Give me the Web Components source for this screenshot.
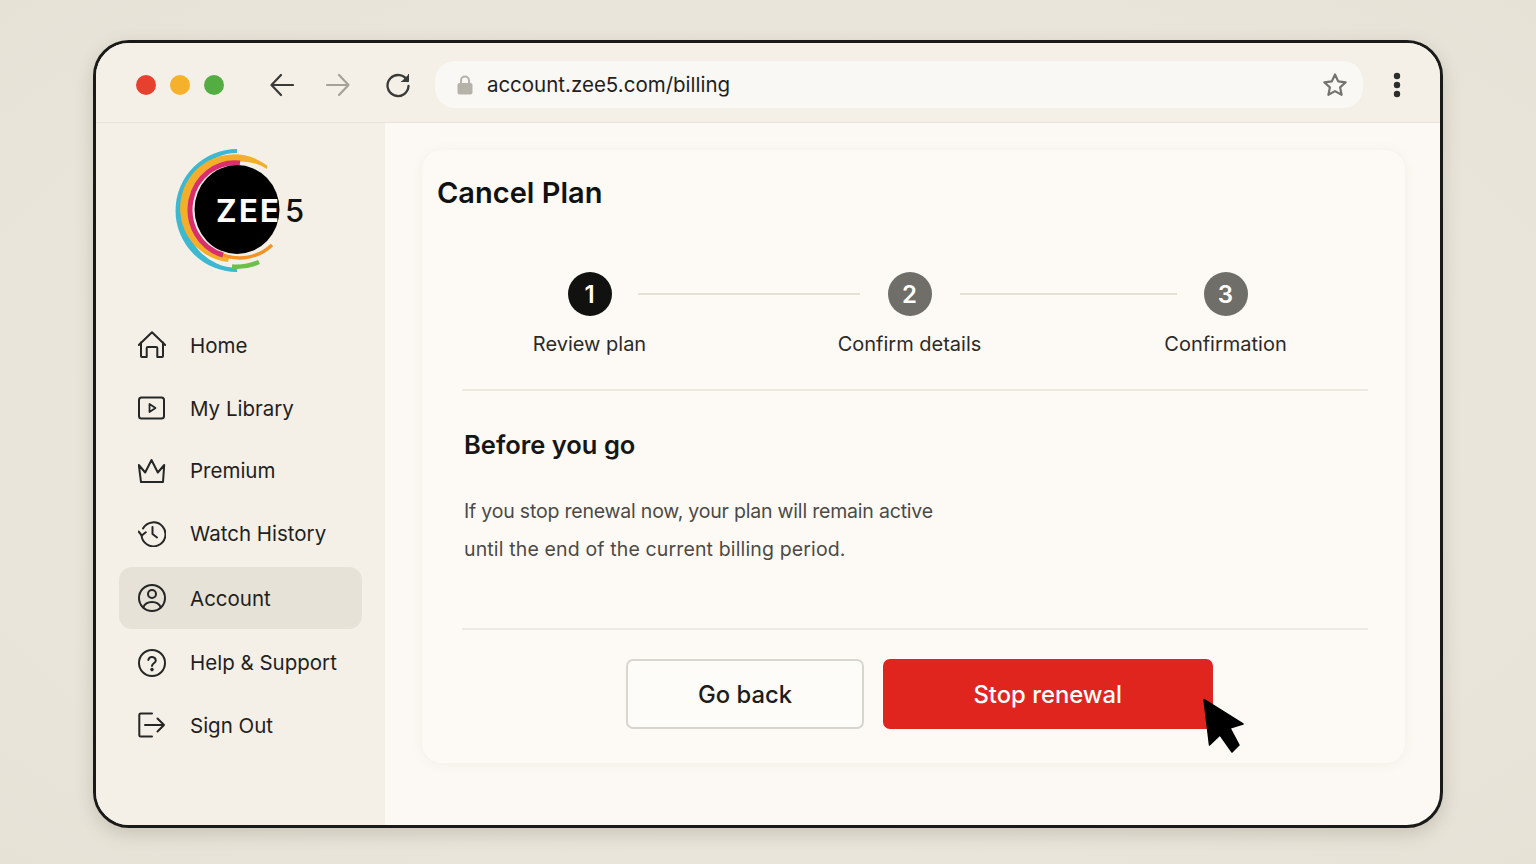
<!DOCTYPE html>
<html lang="en">
<head>
<meta charset="utf-8">
<title>Cancel Plan</title>
<style>
  html, body { margin: 0; height: 100%; }
  body {
    height: 864px;
    overflow: hidden;
    box-sizing: border-box;
    padding: 40px 93px 36px;
    background: radial-gradient(ellipse at center, #ebe8df 0%, #e9e5da 70%, #e6e2d6 100%);
    font-family: Inter, "Liberation Sans", sans-serif;
    color: #1b1b1a;
  }
</style>
</head>
<body>
<browser-window>
  <browser-toolbar slot="toolbar" url="account.zee5.com/billing"></browser-toolbar>
  <side-nav slot="side">
    <zee-logo></zee-logo>
    <nav-item icon="home">Home</nav-item>
    <nav-item icon="library">My Library</nav-item>
    <nav-item icon="crown">Premium</nav-item>
    <nav-item icon="history">Watch History</nav-item>
    <nav-item icon="account" active>Account</nav-item>
    <nav-item icon="help">Help &amp; Support</nav-item>
    <nav-item icon="signout">Sign Out</nav-item>
  </side-nav>
  <cancel-card>
    <step-tracker slot="steps">
      <step-item num="1" current>Review plan</step-item>
      <step-item num="2">Confirm details</step-item>
      <step-item num="3">Confirmation</step-item>
    </step-tracker>
  </cancel-card>
</browser-window>

<script>
const icons = {
  home: '<path d="M.8 14 14 1.200 27.200 14"/><path d="M3 11.500V25a1 1 0 0 0 1 1h4.700v-9a1 1 0 0 1 1-1h8.600a1 1 0 0 1 1 1v9H24a1 1 0 0 0 1-1V11.500"/>',
  library: '<rect x="1" y="3.500" width="25" height="21" rx="2.500"/><path d="M11.500 10v8l6-4z" stroke-width="1.800"/>',
  crown: '<path d="M3 25 .8 8l6.400 7.500L13.500 3l6.300 12.500L26.200 8 25 25z"/>',
  history: '<path d="M5 9.500A12 12 0 1 1 3.500 16"/><path d="M.5 12.500 3.800 16.500l4-3.200"/><path d="M14.500 8v7l4.500 3.500"/>',
  account: '<circle cx="14" cy="14" r="13"/><circle cx="14" cy="10" r="4"/><path d="M5.200 23.500c1.400-3.800 4.600-5.500 8.800-5.500s7.400 1.700 8.800 5.500"/>',
  help: '<circle cx="14" cy="14" r="13"/><path d="M10.300 11a3.800 3.800 0 0 1 7.500.5c0 2.600-3.800 3-3.800 5.500"/><circle cx="14" cy="20.600" r=".8" fill="currentColor"/>',
  signout: '<path d="M14 2.500H2.800A1.500 1.500 0 0 0 1.300 4v20a1.500 1.500 0 0 0 1.500 1.500H14"/><path d="M7 14h19M19.500 7.500 26 14l-6.500 6.500"/>'
};

class BrowserWindow extends HTMLElement {
  constructor() {
    super();
    this.attachShadow({mode: "open"}).innerHTML = `
      <style>
        :host {
          display: grid;
          grid-template-columns: 289px 1fr;
          grid-template-rows: 80px 1fr;
          box-sizing: border-box;
          width: 1350px;
          height: 788px;
          border: 3px solid #1a1a19;
          border-radius: 36px;
          overflow: hidden;
          background: #fcf9f4;
          box-shadow: 0 6px 18px rgba(90, 84, 66, .22);
        }
        ::slotted([slot="toolbar"]) { grid-column: 1 / 3; }
        main { padding: 27px 35px 0 37px; min-width: 0; }
      </style>
      <slot name="toolbar"></slot>
      <slot name="side"></slot>
      <main><slot></slot></main>`;
  }
}

class BrowserToolbar extends HTMLElement {
  constructor() {
    super();
    const url = this.getAttribute("url");
    this.attachShadow({mode: "open"}).innerHTML = `
      <style>
        :host {
          display: flex;
          align-items: center;
          box-sizing: border-box;
          height: 80px;
          padding: 4px 39px 0 39.500px;
          background: #f4f0e8;
          border-bottom: 1px solid #e6e3da;
        }
        .dot { width: 20px; height: 20px; border-radius: 50%; margin-right: 14.200px; }
        svg { display: block; fill: none; stroke-linecap: round; stroke-linejoin: round; }
        .bar {
          flex: 1;
          display: flex;
          align-items: center;
          height: 47px;
          margin-left: 2px;
          margin-right: 30px;
          padding: 0 15px 0 22px;
          border-radius: 20px;
          background: #faf8f4;
        }
        .url { flex: 1; margin-left: 14px; font-size: 20.500px; color: #1f1f1e; }
      </style>
      <span class="dot" style="background:#e8402f"></span>
      <span class="dot" style="background:#f5b02c"></span>
      <span class="dot" style="background:#54ad43;margin-right:46px"></span>
      <svg style="margin-right:32px" width="24" height="24" viewBox="0 0 24 24" stroke="#3a3a38" stroke-width="2.200"><path d="M23 12H2M11 2 1.500 12 11 22"/></svg>
      <svg style="margin-right:35px" width="24" height="24" viewBox="0 0 24 24" stroke="#a5a29a" stroke-width="2.200"><path d="M1 12h21M13 2l9.500 10L13 22"/></svg>
      <svg style="margin-right:22px" width="26" height="26" viewBox="0 0 26 26" stroke="#3a3a38" stroke-width="2.300"><path d="M22.500 9A10.500 10.500 0 1 0 23.500 14"/><path d="M23.500 2.500V9.500H16.500" fill="#3a3a38" stroke-width="1"/></svg>
      <div class="bar">
        <svg width="16" height="20" viewBox="0 0 16 20"><path d="M4 9V5.500a4 4 0 0 1 8 0V9" stroke="#b5b2a9" stroke-width="2"/><rect x="0.500" y="8" width="15" height="11.500" rx="2" fill="#b5b2a9"/></svg>
        <span class="url">${url}</span>
        <svg width="26" height="26" viewBox="0 0 26 26" stroke="#74736e" stroke-width="2.200"><path d="M13 2.500l3.200 6.900 7.500.9-5.600 5.100 1.500 7.400L13 19.100l-6.600 3.700 1.500-7.400-5.600-5.100 7.500-.9z"/></svg>
      </div>
      <svg width="8" height="26" viewBox="0 0 8 26"><circle cx="4" cy="4" r="3.200" fill="#2d2d2b"/><circle cx="4" cy="13" r="3.200" fill="#2d2d2b"/><circle cx="4" cy="22" r="3.200" fill="#2d2d2b"/></svg>`;
  }
}

class SideNav extends HTMLElement {
  constructor() {
    super();
    this.attachShadow({mode: "open"}).innerHTML = `
      <style>
        :host {
          display: flex;
          flex-direction: column;
          box-sizing: border-box;
          padding: 26px 23px 0;
          background: #f4f0e8;
        }
      </style>
      <slot></slot>`;
  }
}

class ZeeLogo extends HTMLElement {
  constructor() {
    super();
    this.attachShadow({mode: "open"}).innerHTML = `
      <style>
        :host {
          display: block;
          position: relative;
          height: 127px;
          margin-bottom: 38px;
        }
        svg { position: absolute; left: 51px; top: -6px; }
        .zee, .five { position: absolute; top: 44px; font-size: 31px; line-height: 36px; font-weight: 700; }
        .zee { left: 97px; color: #fff; letter-spacing: 2.300px; }
        .five { left: 166px; color: #111; font-weight: 500; }
      </style>
      <svg width="140" height="135" viewBox="170 143 140 135" fill="none">
        <path d="M237 149A61.500 61.500 0 0 0 237 272V268A53 57.500 0 0 1 237 153Z" fill="#3db8d0"/>
        <path d="M267 165.500A54 54 0 1 0 228 262L229 258A49 49 0 1 1 267 169Z" fill="#f3af2a"/>
        <path d="M259 262A55 55 0 0 1 232 266.500" stroke="#6fbf4b" stroke-width="4.500"/>
        <path d="M272 245A47 47 0 0 1 222 254.500" stroke="#f39325" stroke-width="3.500"/>
        <path d="M240 163A45 47 0 0 0 223 255" stroke="#d92f6f" stroke-width="5"/>
        <ellipse cx="237" cy="209.500" rx="42.500" ry="44.500" fill="#000"/>
      </svg>
      <span class="zee">ZEE</span><span class="five">5</span>`;
  }
}

class NavItem extends HTMLElement {
  constructor() {
    super();
    this.attachShadow({mode: "open"}).innerHTML = `
      <style>
        :host {
          display: flex;
          align-items: center;
          gap: 24px;
          box-sizing: border-box;
          height: 62.700px;
          padding-left: 19px;
          font-size: 20.500px;
          color: #1f1f1e;
          border-radius: 13px;
        }
        :host([active]) { background: #e6e2d7; margin: 2px 0; }
        svg { flex: none; fill: none; stroke: #262625; stroke-width: 2; stroke-linecap: round; stroke-linejoin: round; }
      </style>
      <svg width="28" height="28" viewBox="0 0 28 28">${icons[this.getAttribute("icon")]}</svg>
      <slot></slot>`;
  }
}

class StepTracker extends HTMLElement {
  constructor() {
    super();
    this.attachShadow({mode: "open"}).innerHTML = `
      <style>
        :host { display: flex; padding-left: 130.500px; }
      </style>
      <slot></slot>`;
  }
}

class StepItem extends HTMLElement {
  constructor() {
    super();
    this.attachShadow({mode: "open"}).innerHTML = `
      <style>
        :host {
          display: flex;
          flex-direction: column;
          align-items: center;
          position: relative;
          width: 44px;
          white-space: nowrap;
          margin-right: 276px;
          font-size: 20px;
          color: #2a2a28;
        }
        :host(:last-child) { margin-right: 0; }
        :host(:nth-child(2)) { margin-right: 272px; }
        .num {
          display: grid;
          place-items: center;
          width: 44px;
          height: 44px;
          margin-bottom: 16px;
          border-radius: 50%;
          background: #6f6e69;
          color: #fff;
          font-size: 24px;
          font-weight: 600;
        }
        :host([current]) .num { background: #111110; }
        .line {
          position: absolute;
          top: 21px;
          left: 70px;
          height: 2px;
          background: #e4e1d9;
        }
        :host(:nth-child(1)) .line { width: 222px; }
        :host(:nth-child(2)) .line { left: 72px; width: 217px; }
        :host(:last-child) .line { display: none; }
      </style>
      <div class="num">${this.getAttribute("num")}</div>
      <div class="line"></div>
      <slot></slot>`;
  }
}

class AppButton extends HTMLElement {
  constructor() {
    super();
    this.attachShadow({mode: "open"}).innerHTML = `
      <style>
        :host {
          display: grid;
          place-items: center;
          box-sizing: border-box;
          height: 70px;
          font-size: 23.800px;
          font-weight: 500;
          border-radius: 7px;
          border: 2px solid #d8d6cf;
          background: #fdfcf9;
          color: #1c1c1b;
        }
        :host([danger]) { background: #e0251f; border-color: #e0251f; color: #fff; }
      </style>
      <slot></slot>`;
  }
}

class CancelCard extends HTMLElement {
  constructor() {
    super();
    this.attachShadow({mode: "open"}).innerHTML = `
      <style>
        :host {
          display: block;
          box-sizing: border-box;
          height: 613px;
          padding: 23px 37px 0 15px;
          border-radius: 20px;
          background: #fdfaf6;
          box-shadow: 0 1px 12px rgba(120, 112, 90, .07);
        }
        h1 { margin: 0 0 59px; font-size: 29px; line-height: 40px; font-weight: 600; color: #111; }
        .divider { height: 2px; background: #ece9e2; margin-left: 25px; }
        .body { padding: 0 0 0 27px; }
        h2 { margin: 0; padding-top: 37px; font-size: 25.500px; line-height: 34px; font-weight: 600; color: #161615; }
        p { margin: 30.500px 0 60px; font-size: 19.500px; line-height: 38px; color: #4b4a46; }
        .l1 { letter-spacing: -.2px; }
        .l2 { letter-spacing: .14px; }
        .actions { display: flex; gap: 18.500px; padding: 29px 0 0 189px; position: relative; }
        app-button:first-child { width: 238px; }
        app-button[danger] { width: 330.500px; }
        .cursor { position: absolute; left: 766px; top: 68px; }
      </style>
      <h1>Cancel Plan</h1>
      <slot name="steps"></slot>
      <div class="divider" style="margin-top:32.500px"></div>
      <div class="body">
        <h2>Before you go</h2>
        <p><span class="l1">If you stop renewal now, your plan will remain active</span><br><span class="l2">until the end of the current billing period.</span></p>
      </div>
      <div class="divider"></div>
      <div class="actions">
        <app-button>Go back</app-button>
        <app-button danger>Stop renewal</app-button>
        <svg class="cursor" width="42" height="56" viewBox="0 0 42 56"><path d="M1 1.500 40 26 27 30 36 47 29 54 17 37 6.500 47z" fill="#000" stroke="#000" stroke-width="1.500" stroke-linejoin="round"/></svg>
      </div>`;
  }
}

customElements.define("browser-window", BrowserWindow);
customElements.define("browser-toolbar", BrowserToolbar);
customElements.define("side-nav", SideNav);
customElements.define("zee-logo", ZeeLogo);
customElements.define("nav-item", NavItem);
customElements.define("step-tracker", StepTracker);
customElements.define("step-item", StepItem);
customElements.define("app-button", AppButton);
customElements.define("cancel-card", CancelCard);
</script>
</body>
</html>
